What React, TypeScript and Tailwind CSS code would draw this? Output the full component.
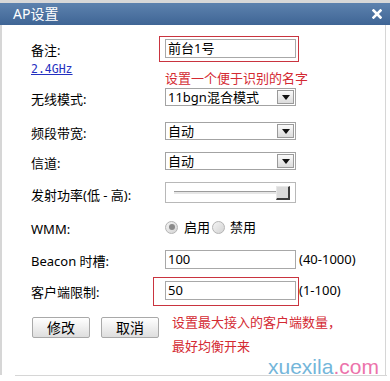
import React from 'react';

const label = 'w-[134px] shrink-0 pt-[4px] text-[13px] leading-[18px] text-black';

const SelectBox = ({ value }: { value: string }) => (
  <div className="w-[131px] h-[18px] border border-[#a3a3a3] bg-white flex items-center justify-between pl-[2px] pr-[1px]">
    <span className="text-[13px] leading-[16px] text-black">{value}</span>
    <div className="w-[17px] h-[14px] border border-[#9a9a9a] bg-gradient-to-b from-[#fafafa] to-[#dcdcdc] flex items-center justify-center">
      <svg width="8" height="5" viewBox="0 0 8 5">
        <path d="M0 0 H8 L4 5 Z" fill="#111" />
      </svg>
    </div>
  </div>
);

const TextBox = ({ value }: { value: string }) => (
  <div className="w-[131px] h-[19px] border border-[#a8a8a8] bg-white flex items-center pl-[2px] text-[13px] leading-[16px] text-black">
    {value}
  </div>
);

const Radio = ({ checked }: { checked: boolean }) => (
  <span className="w-[13px] h-[13px] rounded-full border border-[#b4b4b4] bg-gradient-to-br from-[#f4f4f4] to-[#d4d4d4] flex items-center justify-center">
    {checked && <span className="w-[6px] h-[6px] rounded-full bg-[#8a8a8a]" />}
  </span>
);

const Btn = ({ text }: { text: string }) => (
  <div className="w-[58px] h-[21px] border border-[#a9a9a9] rounded-[2px] bg-gradient-to-b from-[#ffffff] to-[#dedede] flex items-center justify-center text-[14px] leading-[16px] text-black">
    {text}
  </div>
);

export default function App() {
  return (
    <div className="w-[390px] h-[381px] bg-white relative overflow-hidden font-['Noto_Sans','Noto_Sans_CJK_SC',sans-serif]">
      <div className="h-[3px] bg-[#d8d8d8]" />
      {/* title bar */}
      <div className="h-[22px] bg-gradient-to-b from-[#5d82ae] to-[#3f6595] flex items-center justify-between pl-[13px] pr-[8px]">
        <span className="text-white text-[14px] leading-[16px]">AP设置</span>
        <svg width="10" height="10" viewBox="0 0 10 10">
          <path d="M1.5 1.5 L8.5 8.5 M8.5 1.5 L1.5 8.5" stroke="#fff" strokeWidth="2.6" strokeLinecap="square" />
        </svg>
      </div>

      <div className="w-[386px] h-[350px] border-l-2 border-r border-[#d6d6d6] pl-[29px] flex flex-col">
        {/* 备注 */}
        <div className="mt-[13px] h-[20px] flex items-center">
          <span className={label}>备注:</span>
          <div className="relative">
            <TextBox value="前台1号" />
            <div className="absolute -left-[6px] -top-[3px] -right-[3px] -bottom-[4px] border border-[#c9343f]" />
          </div>
        </div>
        <div className="h-[26px] flex items-start">
          <span className="w-[134px] shrink-0 mt-[4px] font-['DejaVu_Sans_Mono',monospace] text-[11.5px] leading-[14px] text-[#2430c0] underline">
            2.4GHz
          </span>
          <span className="mt-[13px] text-[13px] leading-[14px] text-[#d42a33]">设置一个便于识别的名字</span>
        </div>
        {/* 无线模式 */}
        <div className="mt-[4px] h-[18px] flex items-center">
          <span className={label}>无线模式:</span>
          <SelectBox value="11bgn混合模式" />
        </div>
        <div className="mt-[16px] h-[18px] flex items-center">
          <span className={label}>频段带宽:</span>
          <SelectBox value="自动" />
        </div>
        <div className="mt-[12px] h-[18px] flex items-center">
          <span className={label}>信道:</span>
          <SelectBox value="自动" />
        </div>
        {/* 发射功率 */}
        <div className="mt-[12px] h-[21px] flex items-center">
          <span className={label}>发射功率(低 - 高):</span>
          <div className="w-[131px] h-[21px] border border-[#b8b8b8] bg-white flex items-center pl-[8px] pr-[5px]">
            <div className="flex-1 h-[3px] border-t border-[#9c9c9c] bg-[#e6e6e6]" />
            <div className="w-[14px] h-[14px] -ml-[6px] border border-[#e8e8e8] border-r-2 border-b-2 border-r-[#3c3c3c] border-b-[#3c3c3c] bg-[#dadada]" />
          </div>
        </div>
        {/* WMM */}
        <div className="mt-[15px] h-[18px] flex items-center">
          <span className={label}>WMM:</span>
          <div className="flex items-center text-[13px] leading-[16px] text-black">
            <Radio checked />
            <span className="ml-[6px]">启用</span>
            <span className="ml-[2px]"><Radio checked={false} /></span>
            <span className="ml-[5px]">禁用</span>
          </div>
        </div>
        {/* Beacon */}
        <div className="mt-[14px] h-[18px] flex items-center">
          <span className={label}>Beacon 时槽:</span>
          <TextBox value="100" />
          <span className="ml-[3px] text-[13px] leading-[16px] text-black">(40-1000)</span>
        </div>
        {/* 客户端限制 */}
        <div className="mt-[13px] h-[18px] flex items-center">
          <span className={label}>客户端限制:</span>
          <div className="relative">
            <TextBox value="50" />
            <div className="absolute -left-[12px] -top-[4px] -right-[3px] -bottom-[6px] border border-[#c9343f]" />
          </div>
          <span className="ml-[3px] text-[13px] leading-[16px] text-black">(1-100)</span>
        </div>
        {/* buttons */}
        <div className="mt-[18px] flex items-start">
          <div className="ml-[1px] flex gap-[11px]">
            <Btn text="修改" />
            <Btn text="取消" />
          </div>
          <div className="ml-[13px] -mt-[7px] text-[13px] leading-[24px] text-[#d42a33]">
            <div>设置最大接入的客户端数量，</div>
            <div>最好均衡开来</div>
          </div>
        </div>
      </div>
      <div className="ml-[15px] w-[372px] h-px bg-[#d6d6d6]" />

      {/* watermark */}
      <div className="absolute left-[268px] top-[355px] font-['Liberation_Sans',sans-serif] text-[21px] leading-[24px]">
        <span className="text-[#74b6da]">xuexila</span>
        <span className="text-[#ec73ab]">.com</span>
      </div>
    </div>
  );
}
